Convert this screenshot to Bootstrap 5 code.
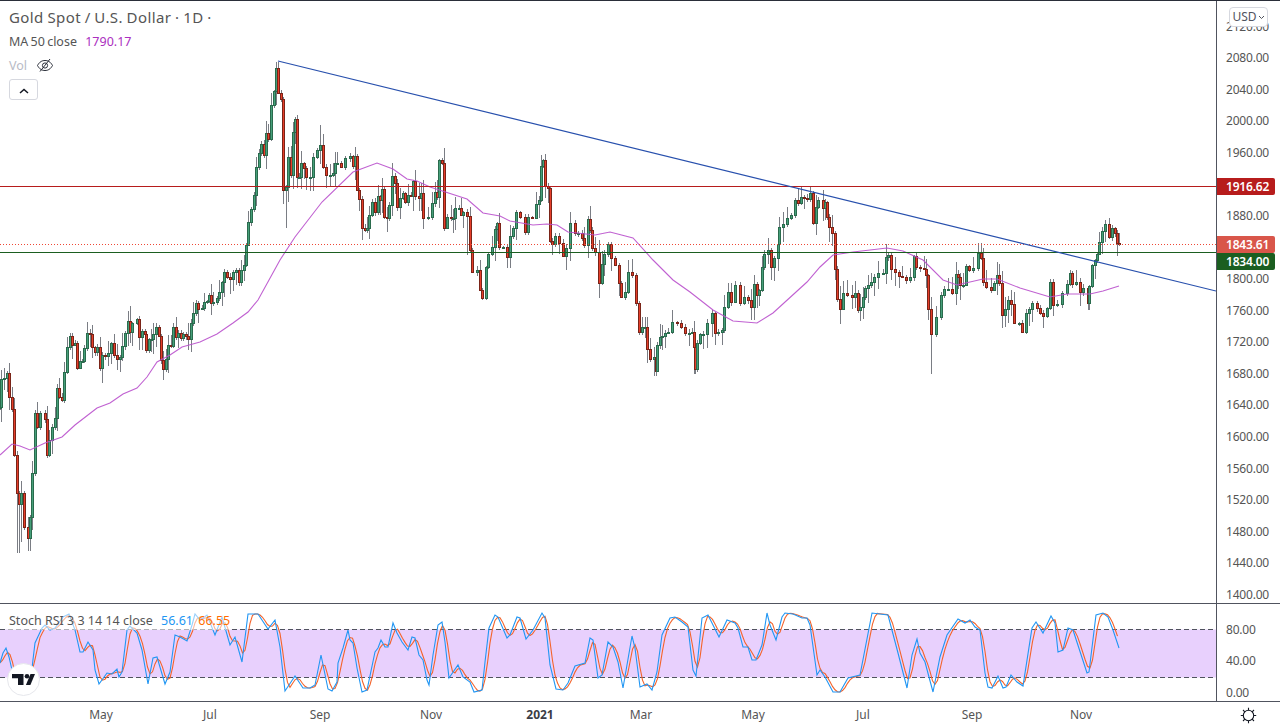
<!DOCTYPE html>
<html lang="en">
<head>
<meta charset="utf-8">
<title>Gold Spot / U.S. Dollar</title>
<link href="https://cdn.jsdelivr.net/npm/bootstrap@5.3.0/dist/css/bootstrap.min.css" rel="stylesheet">
<style>
html,body{height:100%;overflow:hidden;background:#fff}
body{font-family:"Noto Sans","Open Sans",sans-serif;color:#555}
.tv-shell{width:1280px;height:728px;border-top:1px solid #2a2e39}
.pane-main{height:602px;border-bottom:1px solid #50535e;box-sizing:content-box}
.pane-rsi{height:97px;border-bottom:1px solid #50535e;box-sizing:content-box}
.row-time{height:26px}
.plot-area{width:1216px;overflow:hidden}
.plot-area>svg{display:block}
.axis-col{width:64px;border-left:1px solid #50535e;font-size:12px}
.axis-prices{padding-top:9.5px}
.axis-rsi{padding-top:9.85px}
.ax-label{height:31.58px;line-height:31.58px;padding-left:9px;white-space:nowrap;letter-spacing:-.2px}
.axis-rsi .ax-label{height:31.4px;line-height:31.4px}
.price-tag{position:absolute;left:0;width:58px;height:17px;line-height:17px;padding-left:9px;color:#fff;font-weight:600;letter-spacing:-.2px;border-radius:0 2px 2px 0}
.tag-res{top:177px;background:#b71c1c}
.tag-last{top:235px;background:#d9564a}
.tag-sup{top:252px;background:#1b5e20}
.usd-btn{position:absolute;left:12px;top:6px;width:39px;height:20px;padding:0;font-size:12px;line-height:18px;color:#50535e;background:#fff;border:1px solid #d6d8df;border-radius:4px}
.usd-btn svg{vertical-align:1px;margin-left:1px}
.chart-legend{position:absolute;left:9px;top:4px}
.leg-row{height:24px;line-height:24px;white-space:nowrap}
.leg-title{font-size:15px;letter-spacing:.4px;color:#555;word-spacing:-.6px}
.leg-study{font-size:12.5px;color:#555;word-spacing:-1px;margin-top:1px}
.leg-value{color:#ab2fc0;margin-left:6px}
.leg-vol{font-size:12.5px;color:#b8bbc6}
.leg-vol svg{margin-left:9px;vertical-align:-4px}
.collapse-btn{width:29px;height:21px;margin-top:1px;padding:0;line-height:17px;background:#fff;border:1px solid #d6d8df;border-radius:3px}
.rsi-legend{position:absolute;left:8px;top:8px;font-size:12.5px;line-height:18px;padding:0 1px;white-space:nowrap;background:rgba(255,255,255,.55);color:#555}
.rsi-k{color:#2196f3;margin-left:5px}
.rsi-d{color:#ff6d00;margin-left:2px}
.tv-logo{position:absolute;left:7px;top:59px;width:33px;height:33px;background:#fff;border:1px solid #e6e7ec;border-radius:50%}
.time-axis{width:1216px;font-size:12px;padding-left:46px;line-height:26px}
.time-strong{font-weight:700;color:#3a3d46}
.gear-cell{width:64px;padding-left:1px}
</style>
</head>
<body>
<div class="tv-shell d-flex flex-column">
  <div class="pane-main d-flex">
    <div class="plot-area position-relative">
      <svg id="priceSvg" width="1216" height="602" viewBox="0 1 1216 602" aria-label="Price chart"></svg>
      <div class="chart-legend d-flex flex-column align-items-start">
        <div class="leg-row leg-title">Gold Spot / U.S. Dollar · 1D ·</div>
        <div class="leg-row leg-study">MA 50 close <span class="leg-value">1790.17</span></div>
        <div class="leg-row leg-vol">Vol<svg width="18" height="18" viewBox="0 0 18 18" fill="none" stroke="#2a2e39" stroke-width="1"><path d="M1.5 9.5C3.5 5.8 6 4.5 9 4.5s5.5 1.3 7.5 5c-2 3.700-4.500 5-7.500 5s-5.500-1.300-7.500-5z"/><circle cx="9" cy="9.500" r="2.600"/><path d="M4 15.500L14 3"/></svg></div>
        <button type="button" class="btn collapse-btn"><svg width="10" height="6" viewBox="0 0 10 6" fill="none" stroke="#131722" stroke-width="1.500"><path d="M1 5l4-3.500L9 5"/></svg></button>
      </div>
    </div>
    <div class="axis-col axis-prices position-relative">
      <div class="ax-label">2120.00</div><div class="ax-label">2080.00</div><div class="ax-label">2040.00</div><div class="ax-label">2000.00</div><div class="ax-label">1960.00</div><div class="ax-label">&nbsp;</div><div class="ax-label">1880.00</div><div class="ax-label">&nbsp;</div><div class="ax-label">1800.00</div><div class="ax-label">1760.00</div><div class="ax-label">1720.00</div><div class="ax-label">1680.00</div><div class="ax-label">1640.00</div><div class="ax-label">1600.00</div><div class="ax-label">1560.00</div><div class="ax-label">1520.00</div><div class="ax-label">1480.00</div><div class="ax-label">1440.00</div><div class="ax-label">1400.00</div>
      <div class="price-tag tag-res">1916.62</div>
      <div class="price-tag tag-last">1843.61</div>
      <div class="price-tag tag-sup">1834.00</div>
      <button type="button" class="btn usd-btn">USD<svg width="7" height="5" viewBox="0 0 7 5" fill="none" stroke="#50535e"><path d="M1 1l2.500 2.500L6 1"/></svg></button>
    </div>
  </div>
  <div class="pane-rsi d-flex">
    <div class="plot-area position-relative">
      <svg id="rsiSvg" width="1216" height="97" viewBox="0 604 1216 97" aria-label="Stoch RSI"></svg>
      <div class="rsi-legend">Stoch RSI 3 3 14 14 close <span class="rsi-k">56.61</span> <span class="rsi-d">66.55</span></div>
      <div class="tv-logo d-flex align-items-center justify-content-center"><svg width="23" height="11" viewBox="0 0 23 11" fill="#131722"><path d="M0 0h11.500v11H6V4.300H0z"/><circle cx="15" cy="2.300" r="2.300"/><path d="M18.500 0H23l-4.600 11h-4.500z"/></svg></div>
    </div>
    <div class="axis-col axis-rsi">
      <div class="ax-label">80.00</div><div class="ax-label">40.00</div><div class="ax-label">0.00</div>
    </div>
  </div>
  <div class="row-time d-flex">
    <div class="time-axis d-flex" id="timeAxis"></div>
    <div class="gear-cell d-flex align-items-center justify-content-center"><svg width="18" height="18" viewBox="0 0 18 18" fill="none" stroke="#131722" stroke-width="1.100"><circle cx="8.500" cy="9.500" r="5.200"/><path d="M8.500 1.800v2.500M8.500 14.700v2.500M.8 9.500h2.500M13.700 9.500h2.500M3 4l1.800 1.800M12.200 13.200L14 15M14 4l-1.800 1.800M4.800 13.200L3 15"/></svg></div>
  </div>
</div>
<script>
// closes as traced: x,y pairs in page pixels
var closes="0,407 1,379 4,378 7,373 9,397 12,409 14,455 17,493 19,504 21,493 24,527 28,538 30,517 32,473 35,413 37,427 40,413 45,419 47,455 49,440 52,427 55,418 57,388 59,397 62,400 64,372 67,347 70,336 72,345 75,343 77,368 80,361 82,361 84,348 87,333 90,334 92,347 95,352 97,347 100,368 102,355 105,356 108,353 111,343 114,355 117,359 120,357 122,346 125,333 128,321 130,332 132,323 137,319 139,337 142,331 145,334 146,350 149,339 151,339 153,334 156,327 159,336 161,360 163,369 166,359 168,345 171,346 173,327 176,337 178,333 181,338 183,334 186,336 188,339 191,323 193,313 196,303 198,309 202,308 204,302 207,301 209,295 211,303 213,302 217,298 219,292 222,282 224,272 227,277 230,279 233,272 236,270 239,282 241,270 244,265 246,245 248,222 251,209 254,195 256,167 259,153 261,144 264,155 266,133 268,139 271,105 274,91 276,68 278,93 281,99 283,190 286,187 288,157 291,175 293,132 295,119 297,177 299,177 301,163 304,168 306,177 310,177 313,157 317,150 320,145 323,167 326,175 330,175 333,173 335,163 337,163 341,167 345,158 350,156 353,166 355,156 357,190 359,199 362,228 365,230 367,228 369,215 372,202 375,212 378,196 380,200 382,189 384,217 387,218 389,205 392,176 395,183 397,207 400,198 403,193 405,202 408,195 411,196 413,181 415,196 419,198 421,193 423,218 428,217 432,203 435,192 437,197 439,160 442,163 444,228 447,217 451,218 453,218 455,208 459,208 461,215 463,212 467,216 470,250 472,272 477,270 480,290 482,298 486,267 488,254 492,247 495,229 497,223 499,247 503,247 507,257 510,236 513,228 516,212 520,217 525,232 528,217 532,218 536,204 539,200 541,166 543,160 545,186 548,188 550,241 552,244 555,236 559,243 563,256 566,248 570,223 575,233 578,233 582,238 584,245 588,219 590,230 592,248 595,252 599,283 602,264 604,254 608,244 611,258 615,265 619,283 621,297 625,292 628,272 632,275 636,303 639,332 642,327 645,327 647,349 650,359 654,357 656,371 657,345 660,337 662,336 665,333 668,332 672,322 677,323 681,327 685,333 692,332 694,347 695,369 697,343 700,334 703,334 707,323 712,313 715,333 718,332 722,330 724,307 728,292 731,302 735,285 740,303 744,297 748,300 751,307 754,284 757,295 759,290 762,267 764,254 768,250 771,267 774,258 778,244 779,227 783,224 787,218 791,215 795,200 798,203 801,197 807,199 810,193 813,223 816,207 818,200 823,208 825,202 827,217 829,227 832,233 835,269 837,299 840,309 843,293 847,295 852,297 855,293 858,310 860,307 863,297 865,288 868,285 871,282 874,277 878,273 883,273 886,257 888,255 891,269 895,272 899,276 902,277 906,280 910,277 914,256 916,267 920,268 924,269 926,275 928,309 931,334 936,317 941,295 944,289 948,289 952,293 956,274 958,277 960,285 963,285 966,266 969,270 973,268 978,253 981,258 983,282 986,287 991,290 994,283 997,275 999,283 1002,315 1005,309 1008,300 1011,304 1014,323 1019,323 1022,332 1026,313 1029,309 1032,303 1037,308 1040,313 1043,316 1047,308 1050,282 1053,305 1057,304 1062,293 1067,284 1070,273 1072,284 1076,282 1080,292 1083,288 1088,303 1089,286 1092,265 1095,260 1097,254 1099,242 1102,231 1105,224 1109,237 1112,228 1115,233 1117,243 1119,244";
var maLine="0,455 12,444 20,446 30,450 45,443 62,437 75,425 97,408 110,403 123,394 137,388 147,377 157,362 170,355 182,347 200,342 217,334 233,323 248,312 258,300 280,260 295,237 322,202 353,172 377,163 393,169 407,179 417,181 430,187 467,199 483,213 500,216 510,221 533,225 547,224 557,225 568,232 595,235 610,232 633,238 653,260 673,280 690,292 713,310 733,321 757,323 773,313 807,282 820,267 833,255 853,252 887,248 903,251 923,260 943,280 957,285 983,279 997,279 1020,288 1050,297 1067,294 1090,294 1103,291 1119,286";
var stochK="0,663 3,653 6,648 9,657 12,670 15,687 20,690 24,680 32,668 35,643 42,628 45,625 50,630 55,628 63,617 69,614 75,630 80,652 83,652 88,642 93,650 95,670 99,684 107,673 112,674 117,669 119,677 122,672 127,630 130,626 137,633 142,650 148,684 153,658 157,657 165,684 170,672 175,635 180,637 187,641 192,625 195,614 200,620 207,615 215,635 222,617 230,645 235,637 242,662 248,614 258,614 268,629 275,620 280,647 285,691 295,676 303,688 310,688 315,685 321,655 328,689 332,691 337,682 338,663 343,648 348,630 350,640 353,643 357,668 362,692 367,690 375,652 378,648 381,640 385,647 388,647 393,623 397,633 402,642 408,650 412,637 415,638 419,655 423,660 427,680 429,685 433,655 438,625 442,622 445,642 449,678 458,665 463,677 470,682 474,692 482,690 485,662 489,628 495,615 498,617 507,638 510,635 517,617 520,618 526,639 533,630 542,613 545,618 550,665 556,689 563,690 568,683 575,666 585,663 590,638 593,640 598,678 602,675 608,642 613,647 618,662 623,688 632,636 635,648 640,687 647,684 652,690 657,672 662,635 670,618 675,617 682,622 688,627 693,670 696,676 702,618 708,615 713,625 719,637 727,620 735,623 738,628 743,647 748,647 752,660 756,660 762,645 767,613 770,625 776,640 782,617 785,613 793,614 802,618 807,618 810,625 817,675 820,670 825,677 833,692 840,692 848,678 860,675 872,613 888,615 898,653 907,688 912,655 917,639 920,653 925,662 933,692 940,657 947,635 958,619 965,623 970,620 975,627 980,630 985,673 988,687 992,688 998,676 1003,688 1006,687 1011,675 1017,682 1023,686 1032,628 1036,622 1043,633 1051,616 1055,623 1058,652 1063,650 1068,628 1073,630 1087,673 1089,672 1096,615 1103,613 1108,617 1113,630 1119,648";
function parse(s){return s.split(" ").map(function(p){var a=p.split(",");return [+a[0],+a[1]]})}
// expand gaps so candles touch, one bar about every 2.5px
var pts=parse(closes),bars=[];
pts.forEach(function(p,i){
  if(i){var q=pts[i-1],d=p[0]-q[0];
    var n=Math.floor(d/2.6);
    for(var k=1;k<n;k++){bars.push([q[0]+d*k/n,q[1]+(p[1]-q[1])*k/n])}
  }
  bars.push(p)
});
var seed=12345;function rnd(){seed=(seed*1103515245+12345)&0x7fffffff;return seed/0x7fffffff}
var spikes={18:[0,553],22:[0,542],29:[0,551],16:[0,512],130:[306,0],285:[0,228],277:[62,0],444:[148,0],545:[154,0],931:[0,374],655:[0,376],695:[0,374],810:[187,0],1110:[218,0],1088:[0,310],1105:[220,0],467:[0,255],320:[125,0],362:[0,240]};
var wicks="",bodies="";
var prev=bars[0][1];
bars.forEach(function(b){
  var X=Math.round(b[0]),o=prev,c=b[1];prev=c;
  var top=Math.min(o,c),bot=Math.max(o,c);
  var r1=rnd(),r2=rnd();
  var hi=top-(r1<.6?1+r1*5:3+r1*10),lo=bot+(r2<.6?1+r2*5:3+r2*12);
  var s=spikes[X]||spikes[X+1]||spikes[X-1];
  if(s){if(s[0])hi=s[0];if(s[1])lo=s[1]}
  wicks+='<path d="M'+(X+.5)+' '+hi.toFixed(1)+'V'+lo.toFixed(1)+'"/>';
  var h=Math.max(bot-top,1);
  var up=c<=o;
  bodies+='<rect class="bd" x="'+(X-.5)+'" y="'+(Math.round(top)+.5)+'" width="2" height="'+Math.max(Math.round(h),1)+'" fill="'+(up?'#469f7a':'#e63e2a')+'" stroke="'+(up?'#2a6b4d':'#7a2418')+'"/>';
});
function poly(a){return a.map(function(p){return p[0]+","+p[1]}).join(" ")}
var main='';
main+='<g stroke="#7a7d84" stroke-width="1" shape-rendering="crispEdges">'+wicks+'</g>';
main+='<g shape-rendering="crispEdges">'+bodies+'</g>';
main+='<polyline points="'+maLine+'" fill="none" stroke="#b950cc" stroke-width="1.100" stroke-opacity=".9"/>';
main+='<path d="M0 186.500H1216" stroke="#b71c1c" shape-rendering="crispEdges"/>';
main+='<path d="M0 252.500H1216" stroke="#1b5e20" shape-rendering="crispEdges"/>';
main+='<path d="M0 244.500H1216" stroke="#ef4836" stroke-dasharray="1 2" shape-rendering="crispEdges"/>';
main+='<path d="M278 61L1216 291" stroke="#2850ad" stroke-width="1.200" fill="none"/>';
document.getElementById("priceSvg").innerHTML=main;
// Stoch RSI: %D is a 3 bar mean of %K
var K=parse(stochK);
function at(x){if(x<=K[0][0])return K[0][1];for(var i=1;i<K.length;i++){if(x<=K[i][0]){var a=K[i-1],b=K[i];return a[1]+(b[1]-a[1])*(x-a[0])/(b[0]-a[0])}}return K[K.length-1][1]}
var D=[];for(var x=0;x<=1119;x+=2.5){D.push([x,((at(x)+at(x-2.5)+at(x-5))/3).toFixed(1)])}
var rs='';
rs+='<rect x="0" y="629.500" width="1216" height="48" fill="#e8d0fd"/>';
rs+='<path d="M0 629.500H1216M0 677.500H1216" stroke="#50535e" stroke-dasharray="5 3" shape-rendering="crispEdges"/>';
rs+='<polyline points="'+poly(D)+'" fill="none" stroke="#f4632a" stroke-width="1.100"/>';
rs+='<polyline points="'+stochK+'" fill="none" stroke="#2196f3" stroke-width="1.100"/>';
document.getElementById("rsiSvg").innerHTML=rs;
// time axis cells: width from the tick spacing
var ticks=[["May",110],["Jul",108],["Sep",112],["Nov",110],["2021",108,1],["Mar",94],["May",130],["Jul",90],["Sep",128],["Nov",90]];
document.getElementById("timeAxis").innerHTML=ticks.map(function(t){return '<span class="text-center'+(t[2]?' time-strong':'')+'" style="width:'+t[1]+'px">'+t[0]+'</span>'}).join("");
</script>
<script src="https://cdn.jsdelivr.net/npm/bootstrap@5.3.0/dist/js/bootstrap.bundle.min.js"></script>
</body>
</html>
